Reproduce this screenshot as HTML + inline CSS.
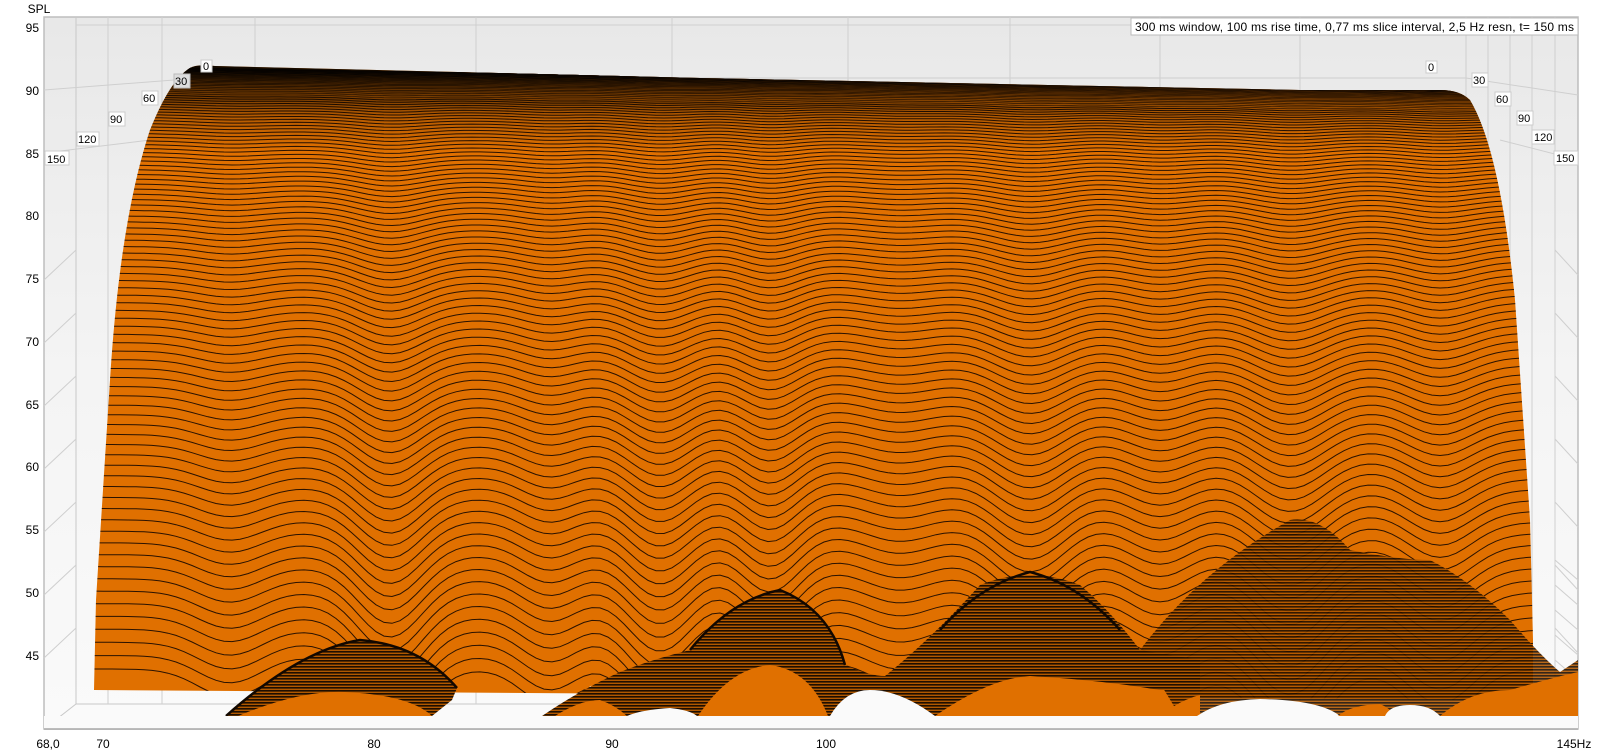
<!DOCTYPE html>
<html><head><meta charset="utf-8">
<style>
html,body{margin:0;padding:0;background:#fff;width:1600px;height:754px;overflow:hidden;font-family:"Liberation Sans",sans-serif;}
svg{display:block}
</style></head>
<body>
<svg id="s" width="1600" height="754" viewBox="0 0 1600 754" xmlns="http://www.w3.org/2000/svg" font-family="Liberation Sans, sans-serif">
<defs>
<linearGradient id="wall" x1="0" y1="0" x2="0" y2="1">
<stop offset="0" stop-color="#e8e8e8"/><stop offset="0.5" stop-color="#f4f4f4"/><stop offset="1" stop-color="#fafafa"/>
</linearGradient>
<linearGradient id="topdark" x1="0" y1="0" x2="0" y2="1">
<stop offset="0" stop-color="#000" stop-opacity="1"/><stop offset="0.2" stop-color="#000" stop-opacity="0.7"/><stop offset="0.6" stop-color="#000" stop-opacity="0.2"/><stop offset="1" stop-color="#000" stop-opacity="0"/>
</linearGradient>
<clipPath id="surf"><path d="M190,68 Q196,64 215,66 L700,78 L1000,84 L1300,90 L1440,90 Q1460,90 1470,100 Q1500,150 1515,300 L1530,520 L1533,640 L1533,700 L94,690 L96,600 L110,380 Q120,220 150,130 Q170,80 190,68 Z"/></clipPath>
<pattern id="stripes" width="8" height="3" patternUnits="userSpaceOnUse">
<rect width="8" height="3" fill="#b05800"/><rect y="0" width="8" height="1.6" fill="#1e0e00"/>
</pattern>
</defs>
<rect x="44" y="17" width="1534" height="712" fill="url(#wall)" stroke="#bdbdbd" stroke-width="1.5"/>
<polygon points="44,729 76,704 1555,704 1578,729" fill="#fafafa"/>
<line x1="76" y1="17" x2="76" y2="704" stroke="#c8c8c8"/>
<line x1="76" y1="704" x2="1555" y2="704" stroke="#c8c8c8"/>
<line x1="44" y1="729" x2="76" y2="704" stroke="#c8c8c8"/>
<g id="grid" stroke="#cfcfcf" stroke-width="1"></g>
<g clip-path="url(#surf)">
<rect x="80" y="60" width="1470" height="640" fill="#e07000"/>
<g id="lines" fill="none" stroke="#2a1200" stroke-width="1"></g>
<rect x="80" y="62" width="1470" height="90" fill="url(#topdark)"/>
</g>
<g id="bumps">
<path d="M226,716 Q300,650 360,640 Q420,645 457,688 L452,700 L432,716 Z" fill="url(#stripes)"/>
<path d="M226,716 Q300,650 360,640 Q420,645 457,688" fill="none" stroke="#120800" stroke-width="2.5"/>
<path d="M238,716 Q300,690 345,692 Q410,695 432,716 Z" fill="#e07000"/>
<path d="M590,686 L620,684 L640,690 L600,716 L575,716 Z" fill="#fafafa"/>
<path d="M542,716 Q580,690 620,672 Q650,660 690,650 Q730,600 780,590 Q830,610 845,665 Q870,676 885,676 Q930,640 980,585 Q1030,565 1080,585 Q1110,610 1140,650 L1200,660 L1200,716 Z" fill="url(#stripes)"/>
<path d="M690,650 Q730,600 780,590 Q830,610 845,665" fill="none" stroke="#120800" stroke-width="2.5"/>
<path d="M940,630 Q980,585 1030,572 Q1080,585 1120,630" fill="none" stroke="#120800" stroke-width="2.5"/>
<path d="M555,716 Q580,700 600,700 Q615,705 627,716 Z" fill="#e07000"/>
<path d="M627,716 Q640,710 670,708 Q690,710 697,716 Z" fill="#fafafa"/>
<path d="M698,716 Q730,668 770,665 Q810,670 828,716 Z" fill="#e07000"/>
<path d="M830,716 Q845,690 870,690 Q900,690 935,716 Z" fill="#fafafa"/>
<path d="M935,716 Q990,678 1030,676 Q1100,680 1160,690 L1200,690 L1200,716 Z" fill="#e07000"/>
<path d="M1140,650 Q1200,570 1290,520 Q1320,515 1350,550 Q1400,560 1430,560 Q1470,580 1510,620 Q1540,655 1560,672 L1578,660 L1578,716 L1180,716 Z" fill="url(#stripes)" opacity="0.9"/>
<path d="M1160,716 Q1180,700 1200,695 L1200,716 Z" fill="#e07000"/>
<path d="M1197,716 Q1220,700 1260,699 Q1320,700 1340,716 Z" fill="#fafafa"/>
<path d="M1338,716 Q1350,705 1380,704 Q1390,708 1395,716 Z" fill="#e07000"/>
<path d="M1385,716 Q1390,705 1410,705 Q1430,705 1440,716 Z" fill="#fafafa"/>
<path d="M1440,716 Q1470,690 1510,690 Q1545,680 1565,675 L1578,672 L1578,716 Z" fill="#e07000"/>
</g>
<rect x="44" y="716" width="1534" height="13" fill="#fafafa"/>
<line x1="44" y1="729" x2="1578" y2="729" stroke="#a8a8a8" stroke-width="1.5"/>
<g font-size="11" fill="#000">
<rect x="201" y="60" width="11" height="12" fill="#fff" stroke="#ccc"/><text x="203" y="70">0</text>
<rect x="174" y="74" width="16" height="14" fill="#ddd" stroke="#bbb"/><text x="175" y="85">30</text>
<rect x="142" y="91" width="16" height="14" fill="#fff" stroke="#ccc"/><text x="143" y="102">60</text>
<rect x="109" y="112" width="16" height="14" fill="#fff" stroke="#ccc"/><text x="110" y="123">90</text>
<rect x="77" y="132" width="22" height="14" fill="#fff" stroke="#ccc"/><text x="78" y="143">120</text>
<rect x="45" y="151" width="24" height="14" fill="#fff" stroke="#ccc"/><text x="47" y="163">150</text>
<rect x="1426" y="61" width="11" height="12" fill="#fff" stroke="#ccc"/><text x="1428" y="71">0</text>
<rect x="1472" y="73" width="16" height="14" fill="#fff" stroke="#ccc"/><text x="1473" y="84">30</text>
<rect x="1495" y="92" width="16" height="14" fill="#fff" stroke="#ccc"/><text x="1496" y="103">60</text>
<rect x="1517" y="111" width="16" height="14" fill="#fff" stroke="#ccc"/><text x="1518" y="122">90</text>
<rect x="1532" y="130" width="22" height="14" fill="#fff" stroke="#ccc"/><text x="1534" y="141">120</text>
<rect x="1554" y="151" width="24" height="14" fill="#fff" stroke="#ccc"/><text x="1556" y="162">150</text>
</g>
<rect x="1131" y="18" width="447" height="17" fill="#fff" stroke="#bbb"/>
<text x="1135" y="31" font-size="12" fill="#000" textLength="439">300 ms window, 100 ms rise time, 0,77 ms slice interval, 2,5 Hz resn, t= 150 ms</text>
<g font-size="12" fill="#000" text-anchor="end">
<text x="39" y="13" text-anchor="middle">SPL</text>
<text x="39" y="32">95</text><text x="39" y="95">90</text><text x="39" y="158">85</text><text x="39" y="220">80</text>
<text x="39" y="283">75</text><text x="39" y="346">70</text><text x="39" y="409">65</text><text x="39" y="471">60</text>
<text x="39" y="534">55</text><text x="39" y="597">50</text><text x="39" y="660">45</text>
</g>
<g font-size="12" fill="#000" text-anchor="middle">
<text x="48" y="748">68,0</text><text x="103" y="748">70</text><text x="374" y="748">80</text><text x="612" y="748">90</text><text x="826" y="748">100</text><text x="1574" y="748">145Hz</text>
</g>
</svg>
<script>
(function(){
var NS="http://www.w3.org/2000/svg";
function el(p,n,a){var e=document.createElementNS(NS,n);for(var k in a)e.setAttribute(k,a[k]);p.appendChild(e);return e;}
var g=document.getElementById('grid');
[108,162,255,476,672,848,1010,1160,1300].forEach(function(x){el(g,'line',{x1:x,y1:17,x2:x,y2:704});});
[1466,1488,1510,1532,1555].forEach(function(x){el(g,'line',{x1:x,y1:17,x2:x,y2:704});});
el(g,'line',{x1:76,y1:25,x2:1466,y2:25});
el(g,'line',{x1:44,y1:90,x2:200,y2:78});
el(g,'line',{x1:200,y1:78,x2:1466,y2:78});
el(g,'line',{x1:1466,y1:78,x2:1578,y2:95});
el(g,'line',{x1:44,y1:153,x2:150,y2:140});
el(g,'line',{x1:1500,y1:140,x2:1578,y2:160});
for(var k=0;k<7;k++){var yy=250+k*63;el(g,'line',{x1:44,y1:yy+30,x2:76,y2:yy});el(g,'line',{x1:1555,y1:yy,x2:1578,y2:yy+25});}
for(var k=0;k<6;k++){el(g,'line',{x1:1555,y1:560+k*25,x2:1578,y2:580+k*25});}
var L=document.getElementById('lines');
var dips=[[230,.4,45],[390,1,45],[550,.5,40],[660,1,45],[770,.9,40],[900,.4,50],[1030,1,50],[1160,.6,45],[1290,1,50],[1440,.7,45]];
function w(x){var s=0;for(var i=0;i<dips.length;i++){var d=(x-dips[i][0])/dips[i][2];s+=dips[i][1]*Math.exp(-d*d);}return s;}
var N=115;
for(var i=0;i<=N;i++){
 var t=i/N; var y0=68+622*Math.pow(t,2.6);
 var amp=70*Math.pow(t,3);
 var pts=[];
 for(var x=80;x<=1545;x+=8){
  var slope=(x-190)/1276*22*(1-t);
  pts.push(x+','+(y0+slope+amp*(w(x)-0.3)).toFixed(1));
 }
 el(L,'polyline',{points:pts.join(' '),'stroke-width':(t<0.3?0.6:1)});
}
})();
</script>
</body></html>
